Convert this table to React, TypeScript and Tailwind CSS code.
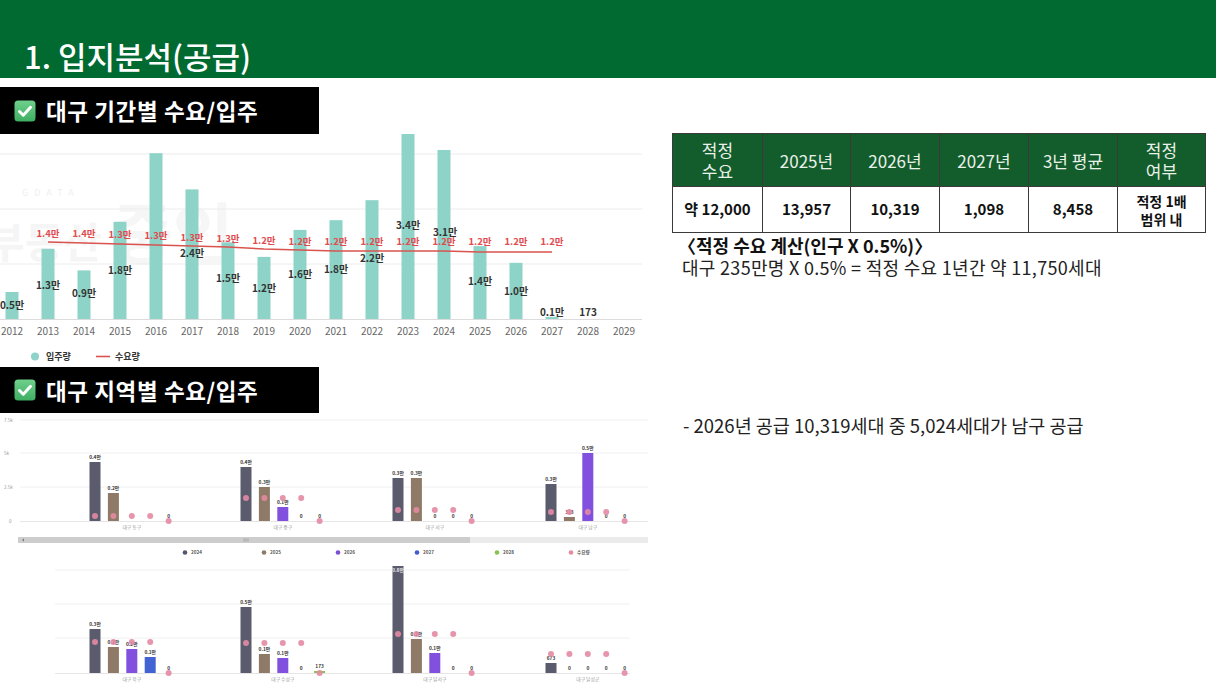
import React from "react";

const years = [2012, 2013, 2014, 2015, 2016, 2017, 2018, 2019, 2020, 2021, 2022, 2023, 2024, 2025, 2026, 2027, 2028, 2029];

// 입주량 (만) + label position
const supply = [
  { v: 0.5, label: "0.5만", ly: 305 },
  { v: 1.3, label: "1.3만", ly: 285 },
  { v: 0.9, label: "0.9만", ly: 293 },
  { v: 1.8, label: "1.8만", ly: 270 },
  { v: 3.07, label: "", ly: 0 },
  { v: 2.4, label: "2.4만", ly: 253 },
  { v: 1.42, label: "1.5만", ly: 278 },
  { v: 1.15, label: "1.2만", ly: 288 },
  { v: 1.65, label: "1.6만", ly: 274 },
  { v: 1.83, label: "1.8만", ly: 269 },
  { v: 2.2, label: "2.2만", ly: 258 },
  { v: 3.45, label: "3.4만", ly: 225 },
  { v: 3.13, label: "3.1만", ly: 232 },
  { v: 1.35, label: "1.4만", ly: 281 },
  { v: 1.04, label: "1.0만", ly: 291 },
  { v: 0.04, label: "0.1만", ly: 312 },
  { v: 0, label: "173", ly: 312 },
  { v: 0, label: "", ly: 0 },
];

// 수요량 line (2013 ~ 2027)
const demand = [
  { y: 242, label: "1.4만", ly: 233 },
  { y: 243, label: "1.4만", ly: 233 },
  { y: 244, label: "1.3만", ly: 234 },
  { y: 245, label: "1.3만", ly: 235 },
  { y: 246, label: "1.3만", ly: 237 },
  { y: 247, label: "1.3만", ly: 238 },
  { y: 249, label: "1.2만", ly: 240 },
  { y: 250, label: "1.2만", ly: 241 },
  { y: 251, label: "1.2만", ly: 241 },
  { y: 251, label: "1.2만", ly: 241 },
  { y: 251, label: "1.2만", ly: 241 },
  { y: 251, label: "1.2만", ly: 241 },
  { y: 252, label: "1.2만", ly: 241 },
  { y: 252, label: "1.2만", ly: 241 },
  { y: 252, label: "1.2만", ly: 241 },
];

const xOf = (i: number) => 12 + 36 * i;

const COLORS = ["#5b5b6e", "#8e7a66", "#8250de", "#4363d2", "#8cc152"];

type Group = {
  name: string;
  x: number;
  bars: { h: number; label: string }[];
  dotY: number;
};

const panelA: Group[] = [
  { name: "대구 동구", x: 95, dotY: 516, bars: [{ h: 59, label: "0.4만" }, { h: 28, label: "0.2만" }, { h: 0, label: "" }, { h: 0, label: "" }, { h: 0, label: "0" }] },
  { name: "대구 중구", x: 246, dotY: 498, bars: [{ h: 54, label: "0.4만" }, { h: 34, label: "0.3만" }, { h: 14, label: "0.1만" }, { h: 0, label: "0" }, { h: 0, label: "0" }] },
  { name: "대구 서구", x: 398, dotY: 510, bars: [{ h: 43, label: "0.3만" }, { h: 43, label: "0.3만" }, { h: 0, label: "0" }, { h: 0, label: "0" }, { h: 0, label: "0" }] },
  { name: "대구 남구", x: 551, dotY: 512, bars: [{ h: 37, label: "0.3만" }, { h: 4, label: "313" }, { h: 68, label: "0.5만" }, { h: 0, label: "0" }, { h: 0, label: "0" }] },
];

const panelB: Group[] = [
  { name: "대구 북구", x: 95, dotY: 642, bars: [{ h: 44, label: "0.3만" }, { h: 26, label: "0.2만" }, { h: 24, label: "0.2만" }, { h: 16, label: "0.1만" }, { h: 0, label: "0" }] },
  { name: "대구 수성구", x: 246, dotY: 643, bars: [{ h: 66, label: "0.5만" }, { h: 19, label: "0.1만" }, { h: 15, label: "0.1만" }, { h: 0, label: "0" }, { h: 2, label: "173" }] },
  { name: "대구 달서구", x: 398, dotY: 634, bars: [{ h: 107, label: "0.8만" }, { h: 34, label: "0.2만" }, { h: 20, label: "0.1만" }, { h: 0, label: "0" }, { h: 0, label: "0" }] },
  { name: "대구 달성군", x: 551, dotY: 654, bars: [{ h: 10, label: "673" }, { h: 0, label: "0" }, { h: 0, label: "0" }, { h: 0, label: "0" }, { h: 0, label: "0" }] },
];

const CheckIcon = () => (
  <svg width="22" height="22" viewBox="0 0 22 22">
    <defs>
      <linearGradient id="chk" x1="0" y1="0" x2="0" y2="1">
        <stop offset="0" stopColor="#6fd08c" />
        <stop offset="1" stopColor="#3fae62" />
      </linearGradient>
    </defs>
    <rect x="0.5" y="0.5" width="21" height="21" rx="3.5" fill="url(#chk)" />
    <path d="M5.5 11.5 L9.3 15.2 L16.5 7.3" fill="none" stroke="#fff" strokeWidth="3" strokeLinecap="round" strokeLinejoin="round" />
  </svg>
);

const Banner = ({ title }: { title: string }) => (
  <div className="w-[319px] h-full bg-black flex items-center pl-[14px] gap-[10px]">
    <CheckIcon />
    <span className="text-white text-[22.5px] font-bold leading-none tracking-[0.6px]">{title}</span>
  </div>
);

const PeriodChart = () => (
  <svg width="650" height="233" viewBox="0 134 650 233" className="block">
    {/* watermark */}
    <text x="-14" y="258" fontSize="42" fontWeight="700" fill="#f5f5f5">부동산</text>
    <text x="112" y="258" fontSize="66" fontWeight="700" fill="#f6f6f6">중인</text>
    <text x="22" y="196" fontSize="9" fill="#f0f0f0" letterSpacing="6">GDATA</text>
    {[154, 209, 264].map((y) => (
      <line key={y} x1="0" x2="642" y1={y} y2={y} stroke="#ececec" strokeWidth="1" />
    ))}
    <line x1="0" x2="642" y1="319.5" y2="319.5" stroke="#dcdcdc" strokeWidth="1" />
    {supply.map((s, i) =>
      s.v > 0 ? (
        <rect key={i} x={xOf(i) - 6.5} y={319 - s.v * 54} width="13" height={s.v * 54} fill="#8dd3c8" />
      ) : null
    )}
    <polyline
      points={demand.map((d, i) => `${xOf(i + 1)},${d.y}`).join(" ")}
      fill="none"
      stroke="#d9534f"
      strokeWidth="1.6"
    />
    {demand.map((d, i) => (
      <text key={i} x={xOf(i + 1)} y={d.ly + 3.5} fontSize="9.5" fontWeight="700" fill="#e14b4f" textAnchor="middle">
        {d.label}
      </text>
    ))}
    {supply.map((s, i) =>
      s.label ? (
        <text key={i} x={xOf(i) + (i === 12 ? 1 : 0)} y={s.ly + 3.5} fontSize="10" fontWeight="600" fill="#333" textAnchor="middle">
          {s.label}
        </text>
      ) : null
    )}
    {years.map((y, i) => (
      <text key={y} x={xOf(i)} y="335" fontSize="10" fill="#666" textAnchor="middle">
        {y}
      </text>
    ))}
    <circle cx="35" cy="356.5" r="4" fill="#8dd3c8" />
    <text x="46" y="360" fontSize="9" fontWeight="700" fill="#333">입주량</text>
    <line x1="96" x2="110" y1="356.5" y2="356.5" stroke="#d9534f" strokeWidth="1.6" />
    <text x="115" y="360" fontSize="9" fontWeight="700" fill="#333">수요량</text>
  </svg>
);

const GroupBars = ({ g, base }: { g: Group; base: number }) => (
  <g>
    {g.bars.map((b, k) => {
      const cx = g.x + k * 18.4;
      const tall = b.h > 90;
      return (
        <g key={k}>
          {b.h > 0 && <rect x={cx - 5.5} y={base - b.h} width="11" height={b.h} fill={COLORS[k]} />}
          {b.label && (
            <text
              x={cx}
              y={tall ? base - b.h + 6 : base - b.h - 3}
              fontSize="4.8"
              fontWeight="700"
              fill={tall ? "#e5e5e5" : "#333"}
              textAnchor="middle"
            >
              {b.label}
            </text>
          )}
          <circle cx={cx} cy={k === 4 ? base : g.dotY} r="3" fill="#e38aa3" opacity="0.9" />
        </g>
      );
    })}
    <text x={g.x + 36.8} y={base + 8} fontSize="4.8" fill="#999" textAnchor="middle">
      {g.name}
    </text>
  </g>
);

const legend = [
  { x: 185, c: "#55556b", t: "2024" },
  { x: 264, c: "#8e7a66", t: "2025" },
  { x: 338, c: "#7b4fd8", t: "2026" },
  { x: 417, c: "#3f5bd0", t: "2027" },
  { x: 497, c: "#86c24f", t: "2028" },
  { x: 571, c: "#e8899c", t: "수요량" },
];

const RegionChart = () => (
  <svg width="650" height="271" viewBox="0 413 650 271" className="block">
    {/* panel A */}
    {[
      { y: 420, t: "7.5k" },
      { y: 453, t: "5k" },
      { y: 487, t: "2.5k" },
    ].map((g) => (
      <g key={g.y}>
        <line x1="20" x2="648" y1={g.y} y2={g.y} stroke="#f0f0f0" />
        <text x="4" y={g.y + 1.5} fontSize="4.5" fill="#999">{g.t}</text>
      </g>
    ))}
    <line x1="20" x2="648" y1="521.5" y2="521.5" stroke="#e6e6e6" />
    <text x="9" y="523" fontSize="4.5" fill="#999">0</text>
    {panelA.map((g) => (
      <GroupBars key={g.name} g={g} base={521} />
    ))}
    {/* scrollbar */}
    <rect x="18" y="537" width="630" height="6" fill="#ebebeb" />
    <rect x="18" y="537" width="452" height="6" fill="#cdcdcd" />
    <path d="M22 540 L24 538.5 L24 541.5 Z" fill="#777" />
    <line x1="244" x2="244" y1="538.5" y2="541.5" stroke="#888" strokeWidth="0.6" />
    <line x1="246" x2="246" y1="538.5" y2="541.5" stroke="#888" strokeWidth="0.6" />
    <line x1="248" x2="248" y1="538.5" y2="541.5" stroke="#888" strokeWidth="0.6" />
    {legend.map((l) => (
      <g key={l.t}>
        <circle cx={l.x} cy="552.5" r="2.3" fill={l.c} />
        <text x={l.x + 6} y="554.3" fontSize="4.6" fontWeight="700" fill="#555">{l.t}</text>
      </g>
    ))}
    {/* panel B */}
    {[570, 604, 638].map((y) => (
      <line key={y} x1="55" x2="630" y1={y} y2={y} stroke="#f0f0f0" />
    ))}
    <line x1="55" x2="630" y1="673.5" y2="673.5" stroke="#e6e6e6" />
    {panelB.map((g) => (
      <GroupBars key={g.name} g={g} base={673} />
    ))}
  </svg>
);

const headers = [["적정", "수요"], ["2025년"], ["2026년"], ["2027년"], ["3년 평균"], ["적정", "여부"]];
const values = [["약 12,000"], ["13,957"], ["10,319"], ["1,098"], ["8,458"], ["적정 1배", "범위 내"]];
const colW = ["w-[90px]", "w-[88px]", "w-[89px]", "w-[89px]", "w-[89px]", "w-[88px]"];

export default function App() {
  return (
    <div className="w-[1216px] h-[684px] overflow-hidden bg-white font-['Noto_Sans_CJK_KR','Noto_Sans',sans-serif]">
      {/* Header */}
      <div className="h-[78px] bg-[#006a31] flex items-end pl-[24px] pb-[4px]">
        <h1 className="text-white text-[31px] font-medium leading-[36px]">1. 입지분석(공급)</h1>
      </div>

      <div className="flex">
        {/* Left: charts */}
        <div className="w-[650px] shrink-0">
          <div className="mt-[9px] h-[47px]">
            <Banner title="대구 기간별 수요/입주" />
          </div>
          <PeriodChart />
          <div className="h-[46px]">
            <Banner title="대구 지역별 수요/입주" />
          </div>
          <RegionChart />
        </div>

        {/* Right: table and notes */}
        <div className="flex-1 pl-[22px] pt-[55px]">
          <table className="border-collapse text-center">
            <thead>
              <tr className="h-[53px] bg-[#135c2c]">
                {headers.map((h, i) => (
                  <th
                    key={i}
                    className={`${colW[i]} border border-[#3a3a3a] text-[#e9f1e9] text-[17px] font-normal leading-[21px]`}
                  >
                    {h.map((line) => (
                      <div key={line}>{line}</div>
                    ))}
                  </th>
                ))}
              </tr>
            </thead>
            <tbody>
              <tr className="h-[46px]">
                {values.map((v, i) => (
                  <td
                    key={i}
                    className={`border border-[#3a3a3a] text-[#111] font-semibold ${
                      v.length > 1 ? "text-[14px] leading-[18px]" : "text-[15px]"
                    }`}
                  >
                    {v.map((line) => (
                      <div key={line}>{line}</div>
                    ))}
                  </td>
                ))}
              </tr>
            </tbody>
          </table>

          <div className="pl-[6px] mt-[1px] text-[#111]">
            <p className="text-[18px] font-bold leading-[22px]">〈적정 수요 계산(인구 X 0.5%)〉</p>
            <p className="pl-[4px] text-[18px] leading-[22px] text-[#222] tracking-[0.3px]">
              대구 235만명 X 0.5% = 적정 수요 1년간 약 11,750세대
            </p>
          </div>

          <p className="mt-[135px] pl-[11px] text-[18.5px] leading-[24px] text-[#222]">
            - 2026년 공급 10,319세대 중 5,024세대가 남구 공급
          </p>
        </div>
      </div>
    </div>
  );
}
